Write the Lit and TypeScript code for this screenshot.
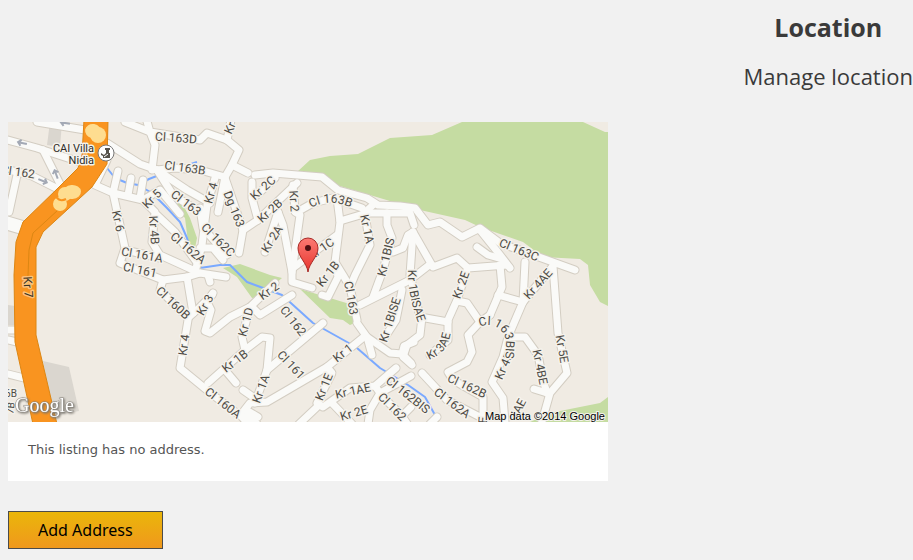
import { LitElement, html, svg, css } from "lit";
import { customElement } from "lit/decorators.js";

type Label = [text: string, x: number, y: number, angle: number];

// Minor roads, as polylines on the map's own grid.
const ROADS: string[] = [
  "8,140 37,148 80,162",
  "37,122 85,130",
  "0,168 30,175 62,191",
  "43,150 63,190",
  "17,175 9,212",
  "8,330 16,330",
  "8,340 17,342",
  "8,374 24,378",
  "107,143 140,164 157,170 187,190 210,203",
  "125,122 150,132 155,145 152,170",
  "146,118 150,132 200,140 207,133 227,140 239,150 232,165 225,177 218,212",
  "157,170 175,168 200,170 225,177",
  "232,165 248,173",
  "227,140 231,120",
  "107,160 95,185 113,193 143,200",
  "118,171 113,193",
  "131,178 128,195",
  "143,180 140,198",
  "113,193 125,248 120,263 163,280 187,277 200,273",
  "125,250 160,258",
  "143,200 155,212 152,242 160,255 193,270",
  "157,215 175,232 198,264",
  "143,200 160,190 180,214",
  "157,170 173,195 203,214",
  "215,178 207,205 202,245 195,272",
  "200,208 203,228 227,255",
  "200,248 213,248 223,260",
  "225,178 243,230 239,253",
  "243,230 258,220 252,198 252,182",
  "258,220 297,183",
  "257,195 275,178",
  "255,175 273,173 322,177 338,190 367,198 378,205 400,206 415,208 428,225 440,222 462,237 480,228 500,243 575,270",
  "293,185 295,212 300,215 292,272 292,282 312,288",
  "278,212 283,225 292,272",
  "278,212 265,252",
  "297,212 313,203 333,198 362,208",
  "373,205 363,214",
  "337,198 340,222 335,262 343,275 350,287 357,320",
  "340,221 367,213 410,213 414,225",
  "365,215 370,245 355,275 350,287",
  "387,213 387,225 392,238 383,270 373,297",
  "337,235 293,268",
  "335,262 338,277 328,297 322,295",
  "393,252 403,248 408,235 413,232 433,267 457,258 468,268 507,265",
  "480,230 500,255 510,268",
  "477,247 488,255 502,259",
  "500,265 502,287 490,315",
  "498,295 523,302",
  "525,262 523,302 508,337 503,357 492,382 503,398 505,422",
  "553,266 523,302",
  "553,266 558,333 567,373 550,393 541,425",
  "510,337 525,337 538,355 543,380 547,393",
  "547,393 534,389",
  "467,270 457,300 448,320 448,340 430,355",
  "457,301 467,303 480,322",
  "490,315 480,322 468,335 472,352 467,362 448,372 453,380 483,397 483,424",
  "422,373 447,400 480,417",
  "413,232 410,275 420,317 448,322",
  "422,317 420,335 407,345 403,357 412,365",
  "402,290 396,320 385,337",
  "428,266 410,280 360,305",
  "357,323 367,337 390,353 402,354 411,363",
  "367,337 372,355",
  "402,354 404,346 414,342",
  "365,336 327,367 267,402 250,403 243,412 257,424",
  "250,307 242,337 245,350",
  "208,383 245,350 262,337 270,338 267,370 255,403",
  "225,370 236,383",
  "267,370 323,323",
  "275,283 250,307 230,317 210,333 205,331 211,310 207,302 213,293",
  "252,307 260,315 292,295",
  "187,277 193,313",
  "163,280 160,290 188,318 199,308 212,295",
  "188,320 180,368 213,395 242,417 250,426",
  "200,273 226,277",
  "208,275 210,282",
  "243,390 256,399",
  "246,410 258,417",
  "327,367 332,373 317,403 323,407 350,388 375,386 396,368",
  "317,407 299,424",
  "332,403 352,424",
  "375,386 380,393 370,410 368,424",
  "380,393 411,376",
  "385,399 402,416 411,407",
  "402,416 408,425",
  "430,424 437,417",
];

const PARKS: string[] = [
  "297,172 310,160 330,156 358,154 390,138 432,135 462,122 583,122 605,132 608,132 608,306 600,302 590,285 588,265 580,259 543,257 523,242 480,227 465,220 420,210 323,181",
  "608,397 600,403 550,413 530,422 608,422",
  "160,187 183,205 190,218 197,238 195,248 188,242 185,218 160,193",
  "223,268 240,264 270,275 282,278 260,297 252,298 237,277",
  "300,289 353,305 357,322 350,325 343,320 330,318",
];

const BLOCKS: string[] = [
  "50,122 62,122 60,147 47,145",
  "43,361 69,367 79,411 52,416",
  "8,305 15,306 15,325 8,325",
];

const LABELS: Label[] = [
  ["Cl 163D", 176, 138, 4],
  ["Cl 163B", 185, 168, 8],
  ["Cl 163", 186, 203, 37],
  ["Cl 162", 18, 172, 8],
  ["Kr 6", 118, 221, 78],
  ["Kr 5", 152, 199, -45],
  ["Kr 4B", 154, 230, 86],
  ["Cl 162A", 188, 248, 40],
  ["Cl 161A", 142, 255, 10],
  ["Cl 161", 140, 270, 12],
  ["Kr 4", 211, 193, -75],
  ["Dg 163", 234, 209, 68],
  ["Kr 2C", 263, 188, -42],
  ["Kr 2B", 270, 211, -42],
  ["Kr 2", 294, 201, 86],
  ["Kr 2A", 272, 239, -58],
  ["Cl 162C", 218, 240, 45],
  ["Kr 1A", 367, 229, 78],
  ["Kr 1BIS", 386, 257, -76],
  ["Kr 1C", 321, 249, -35],
  ["Kr 1B", 328, 274, -52],
  ["Cl 163C", 519, 250, 22],
  ["Kr 4AE", 538, 284, -48],
  ["Kr 2E", 461, 285, -70],
  ["Kr 1BISE", 390, 320, -72],
  ["Cl 163", 351, 298, 80],
  ["Kr 2", 269, 291, -35],
  ["Cl 162", 293, 321, 52],
  ["Kr 1D", 246, 322, -75],
  ["Kr 1B", 235, 361, -38],
  ["Cl 161", 291, 365, 47],
  ["Kr 1A", 261, 389, -70],
  ["Cl 160A", 223, 403, 38],
  ["Kr 1", 343, 353, -38],
  ["Kr 1E", 324, 387, -68],
  ["Kr 1AE", 353, 391, -12],
  ["Kr 2E", 354, 413, -16],
  ["Cl 162", 392, 407, 45],
  ["Cl 162BIS", 408, 395, 38],
  ["Cl 162A", 452, 403, 37],
  ["Cl 162B", 467, 386, 25],
  ["Kr 4E", 504, 366, -66],
  ["Kr 4BE", 540, 367, 78],
  ["Kr 5E", 562, 349, 80],
  ["4AE", 518, 409, -62],
  ["Kr 3", 205, 305, -60],
  ["Cl 160B", 173, 303, 43],
  ["Kr 4", 184, 345, -82],
  ["Kr", 230, 128, -65],
  ["E", 483, 420, -86],
];

const CURVED: [id: string, text: string, d: string][] = [
  ["curve-a", "Cl 163B", "M311 208 Q328 198 350 207"],
  ["curve-b", "Cl 163BIS", "M480 327 A18 18 0 0 1 506 345 L505 362"],
  ["curve-c", "Kr 3AE", "M429 360 C440 355 451 350 452 320"],
  ["curve-d", "Kr 1BISAE", "M408 270 Q407 294 420 328"],
];

// Light patches that lie on the main road.
const PATCHES: [cx: number, cy: number, rx: number, ry: number, angle: number][] = [
  [93, 131, 8, 7, 10],
  [98, 135, 8, 8, 0],
  [72, 192, 9, 7, -5],
  [65, 194, 7, 7, 0],
  [60, 204, 7, 7, 0],
];

const ARROWS: [x: number, y: number, angle: number][] = [
  [22, 143, 192],
  [65, 123, 188],
  [43, 181, 22],
  [56, 174, -110],
];

@customElement("location-map")
class LocationMap extends LitElement {
  static styles = css`
    :host { display: block; }
    .map { display: block; width: 100%; height: auto; overflow: hidden; }
    .casing, .road { fill: none; stroke-linecap: round; stroke-linejoin: round; }
    .casing { stroke: #d3cdc2; stroke-width: 9px; }
    .road { stroke: #fafaf8; stroke-width: 7px; }
    .wide.casing { stroke-width: 15px; }
    .wide.road { stroke-width: 13px; }
    .park { fill: #c5dca2; }
    .block { fill: #dad6cf; }
    .river { fill: none; stroke: #7aa9ff; stroke-width: 2px; stroke-linejoin: round; }
    .highway { fill: #f99420; stroke: #dc8613; stroke-width: 1px; }
    .lane { fill: none; stroke: #dc8613; stroke-width: 1px; }
    .patch { fill: #fedd90; }
    .arrow { fill: none; stroke: #a3a9b5; stroke-width: 2px; }
    text { font-family: Roboto, "Liberation Sans", sans-serif; }
    .label, .place {
      font-size: 12px; fill: #4d4b45; stroke: #f5f2ec; stroke-width: 3px;
      stroke-linejoin: round; paint-order: stroke;
    }
    .label { text-anchor: middle; }
    .curved { text-anchor: start; }
    .place { font-size: 11px; text-anchor: end; fill: #2e2c28; }
    .major { fill: #3a3325; stroke: #fcc27b; }
    .tiny { font-size: 10px; }
    .badge { fill: #fff; stroke: #777; stroke-width: 1px; }
    .glyph { fill: #56524b; }
    .brand {
      font-family: "Liberation Serif", serif; font-size: 20px; fill: #fff;
      stroke: #8b8780; stroke-width: 1px; paint-order: stroke;
      filter: drop-shadow(1px 1px 1px #77736c);
    }
    .credit {
      font-family: "Liberation Sans", Arial, sans-serif; font-size: 11px; text-anchor: end;
      fill: #000; stroke: #f3f1ec; stroke-width: 2px; paint-order: stroke;
    }
    .pin { fill: url(#pin-fill); stroke: #a82a26; stroke-width: 1px; }
    .pin-dot { fill: #4f0f12; }
  `;

  render() {
    return html`
      <svg class="map" viewBox="8 122 600 300" role="img" aria-label="Street map of the listing">
        <defs>
          <linearGradient id="pin-fill" x1="0" y1="0" x2="0" y2="1">
            <stop offset="0" stop-color="#fb7a73"></stop>
            <stop offset="1" stop-color="#e8352e"></stop>
          </linearGradient>
          ${CURVED.map(([id, , d]) => svg`<path id=${id} d=${d}></path>`)}
        </defs>
        <rect x="8" y="122" width="600" height="300" fill="#f0ebe3"></rect>
        ${BLOCKS.map((p) => svg`<polygon class="block" points=${p}></polygon>`)}
        ${PARKS.map((p) => svg`<polygon class="park" points=${p}></polygon>`)}
        <polyline class="river" points="107,168 115,178 127,183 138,185 152,193 167,208 180,222 187,238 192,255 194,266 200,268 220,265 230,265 240,275 247,282 282,295 313,323 347,342 357,348 380,368 408,385 425,397 435,415"></polyline>
        <polyline class="river" points="138,185 149,179 167,172 197,162"></polyline>
        <polyline class="casing wide" points="0,221 24,228"></polyline>
        ${ROADS.map((p) => svg`<polyline class="casing" points=${p}></polyline>`)}
        <polyline class="road wide" points="0,221 24,228"></polyline>
        ${ROADS.map((p) => svg`<polyline class="road" points=${p}></polyline>`)}
        <polygon class="highway" points="84,120 108,120 107,164 92,187 43,232 36,247 36,335 57,424 33,424 15,342 14,275 16,242 23,222 58,188 78,168 82,155"></polygon>
        <polyline class="lane" points="58,210 33,233 29,250 28,276"></polyline>
        ${PATCHES.map(([cx, cy, rx, ry, a]) => svg`
          <ellipse class="patch" cx=${cx} cy=${cy} rx=${rx} ry=${ry} transform="rotate(${a} ${cx} ${cy})"></ellipse>`)}
        <path d="M54 193 Q58 203 66 199" fill="none" stroke="#f99420" stroke-width="2"></path>
        ${ARROWS.map(([x, y, a]) => svg`
          <path class="arrow" d="M-5 0H4M1 -3L4 0L1 3" transform="translate(${x} ${y}) rotate(${a})"></path>`)}
        ${LABELS.map(([t, x, y, a]) => svg`
          <text class="label" y="4" transform="translate(${x} ${y}) rotate(${a})">${t}</text>`)}
        ${CURVED.map(([id, t]) => svg`
          <text class="label curved"><textPath href="#${id}">${t}</textPath></text>`)}
        <text class="label major" y="4" transform="translate(28 287) rotate(86)">Kr 7</text>
        <text class="label tiny" x="11" y="397">6B</text>
        <text class="label tiny" y="4" transform="translate(10 408) rotate(-84)">7B</text>
        <text class="place" x="94" y="152">CAI Villa</text>
        <text class="place" x="94" y="164">Nidia</text>
        <circle class="badge" cx="106" cy="153" r="8"></circle>
        <path class="glyph" d="M105 148h5v2h-1v3h-3v-3h-1zM101 153l3 2 2-2h4v5h-7v-2l-2-1z"></path>
        <path d="M104 157l4-3" stroke="#fff" stroke-width="1"></path>
        <path class="pin" d="M308 272C307 263 298 257 298 248a10 10 0 0 1 20 0C318 257 309 263 308 272Z"></path>
        <circle class="pin-dot" cx="308" cy="248" r="3"></circle>
        <text class="brand" x="15" y="412">Google</text>
        <text class="credit" x="605" y="420">Map data ©2014 Google</text>
      </svg>
    `;
  }
}

@customElement("app-root")
class AppRoot extends LitElement {
  static styles = css`
    :host {
      display: block; box-sizing: border-box; min-height: 100vh; padding: 8px 0 11px 8px;
      background: #f1f1f1; color: #3a3a3a; font-family: "Open Sans", "Noto Sans", sans-serif;
    }
    .heading { display: flex; flex-direction: column; align-items: center; width: max-content; margin-left: auto; }
    .title { margin: 0; font-size: 25px; line-height: 38px; font-weight: 700; }
    .subtitle { margin: 13px 0 29px; font-size: 22px; line-height: 34px; }
    .card { max-width: 600px; background: #fff; }
    .note { margin: 0; padding: 18px 20px 21px; font-size: 13px; line-height: 20px; color: #555; font-family: "DejaVu Sans", sans-serif; }
    .add {
      margin-top: 30px; height: 38px; padding: 0 29px; border: 1px solid #4b4b4b;
      background: linear-gradient(#eab60a, #f0981c); color: #000;
      font: 16px/24px "Noto Sans", sans-serif; cursor: pointer;
    }
  `;

  render() {
    return html`
      <main>
        <header class="heading">
          <h1 class="title">Location</h1>
          <p class="subtitle">Manage location</p>
        </header>
        <section class="card">
          <location-map></location-map>
          <p class="note">This listing has no address.</p>
        </section>
        <button class="add" type="button">Add Address</button>
      </main>
    `;
  }
}
